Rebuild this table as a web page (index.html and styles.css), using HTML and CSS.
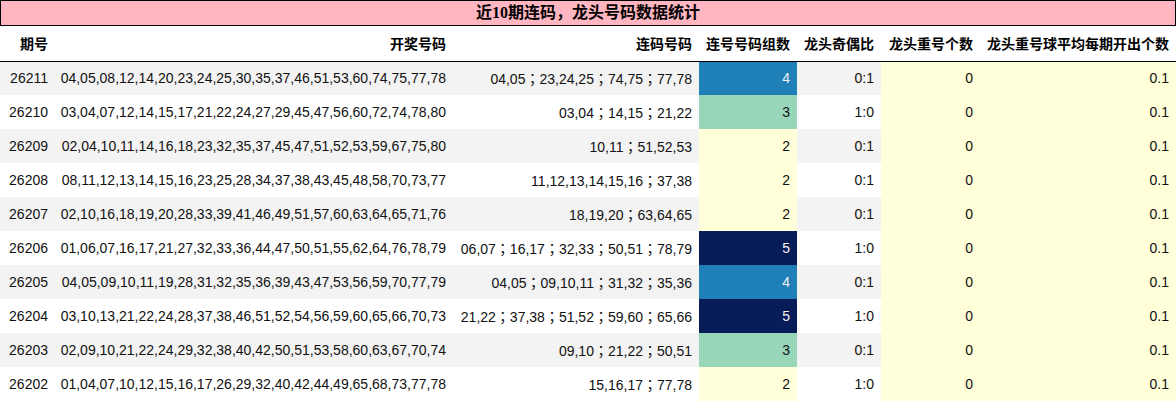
FILE: index.html
```html
<!DOCTYPE html>
<html lang="zh">
<head>
<meta charset="utf-8">
<title>近10期连码，龙头号码数据统计</title>
<link rel="stylesheet" href="styles.css">
</head>
<body>
<div class="title">近10期连码，龙头号码数据统计</div>
<table class="stats">
  <colgroup>
    <col class="c1"><col class="c2"><col class="c3"><col class="c4"><col class="c5"><col class="c6"><col class="c7">
  </colgroup>
  <thead>
    <tr>
      <th>期号</th><th>开奖号码</th><th>连码号码</th><th>连号号码组数</th><th>龙头奇偶比</th><th>龙头重号个数</th><th>龙头重号球平均每期开出个数</th>
    </tr>
  </thead>
  <tbody>
    <tr class="odd"><td>26211</td><td>04,05,08,12,14,20,23,24,25,30,35,37,46,51,53,60,74,75,77,78</td><td>04,05；23,24,25；74,75；77,78</td><td class="g4">4</td><td>0:1</td><td class="y">0</td><td class="y">0.1</td></tr>
    <tr><td>26210</td><td>03,04,07,12,14,15,17,21,22,24,27,29,45,47,56,60,72,74,78,80</td><td>03,04；14,15；21,22</td><td class="g3">3</td><td>1:0</td><td class="y">0</td><td class="y">0.1</td></tr>
    <tr class="odd"><td>26209</td><td>02,04,10,11,14,16,18,23,32,35,37,45,47,51,52,53,59,67,75,80</td><td>10,11；51,52,53</td><td class="g2">2</td><td>0:1</td><td class="y">0</td><td class="y">0.1</td></tr>
    <tr><td>26208</td><td>08,11,12,13,14,15,16,23,25,28,34,37,38,43,45,48,58,70,73,77</td><td>11,12,13,14,15,16；37,38</td><td class="g2">2</td><td>0:1</td><td class="y">0</td><td class="y">0.1</td></tr>
    <tr class="odd"><td>26207</td><td>02,10,16,18,19,20,28,33,39,41,46,49,51,57,60,63,64,65,71,76</td><td>18,19,20；63,64,65</td><td class="g2">2</td><td>0:1</td><td class="y">0</td><td class="y">0.1</td></tr>
    <tr><td>26206</td><td>01,06,07,16,17,21,27,32,33,36,44,47,50,51,55,62,64,76,78,79</td><td>06,07；16,17；32,33；50,51；78,79</td><td class="g5">5</td><td>1:0</td><td class="y">0</td><td class="y">0.1</td></tr>
    <tr class="odd"><td>26205</td><td>04,05,09,10,11,19,28,31,32,35,36,39,43,47,53,56,59,70,77,79</td><td>04,05；09,10,11；31,32；35,36</td><td class="g4">4</td><td>0:1</td><td class="y">0</td><td class="y">0.1</td></tr>
    <tr><td>26204</td><td>03,10,13,21,22,24,28,37,38,46,51,52,54,56,59,60,65,66,70,73</td><td>21,22；37,38；51,52；59,60；65,66</td><td class="g5">5</td><td>1:0</td><td class="y">0</td><td class="y">0.1</td></tr>
    <tr class="odd"><td>26203</td><td>02,09,10,21,22,24,29,32,38,40,42,50,51,53,58,60,63,67,70,74</td><td>09,10；21,22；50,51</td><td class="g3">3</td><td>0:1</td><td class="y">0</td><td class="y">0.1</td></tr>
    <tr><td>26202</td><td>01,04,07,10,12,15,16,17,26,29,32,40,42,44,49,65,68,73,77,78</td><td>15,16,17；77,78</td><td class="g2">2</td><td>1:0</td><td class="y">0</td><td class="y">0.1</td></tr>
  </tbody>
</table>
</body>
</html>
```
FILE: styles.css
```css
html, body {
  margin: 0;
  padding: 0;
  background: #ffffff;
}

.title {
  box-sizing: border-box;
  width: 1176px;
  height: 26px;
  line-height: 24px;
  border: 1px solid #000;
  background: #ffb6c1;
  text-align: center;
  font-family: "Liberation Serif", "Noto Sans CJK SC", serif;
  font-weight: bold;
  font-size: 16px;
  color: #000;
}

.stats {
  width: 1176px;
  border-collapse: collapse;
  table-layout: fixed;
  font-family: "Liberation Sans", "Noto Sans CJK TC", sans-serif;
  font-size: 14px;
  color: #111;
}

.c1 { width: 55px; }
.c2 { width: 398px; }
.c3 { width: 246px; }
.c4 { width: 98px; }
.c5 { width: 84px; }
.c6 { width: 99px; }
.c7 { width: 196px; }

.stats th {
  height: 35px;
  box-sizing: border-box;
  padding: 0 7px 0 4px;
  text-align: right;
  font-family: "Noto Sans CJK SC", sans-serif;
  font-weight: bold;
  font-size: 14px;
  color: #000;
  border-bottom: 1px solid #000;
  white-space: nowrap;
}

.stats td {
  height: 34px;
  box-sizing: border-box;
  padding: 0 7px 0 4px;
  text-align: right;
  white-space: nowrap;
}

.stats tr.odd td {
  background: #f3f3f3;
}

.stats td.y,
.stats tr.odd td.y,
.stats td.g2,
.stats tr.odd td.g2 {
  background: #ffffd9;
}

.stats td.g3,
.stats tr.odd td.g3 {
  background: #97d6b9;
}

.stats td.g4,
.stats tr.odd td.g4 {
  background: #1f80b8;
  color: #f1f1f1;
}

.stats td.g5,
.stats tr.odd td.g5 {
  background: #081d58;
  color: #f1f1f1;
}
```
